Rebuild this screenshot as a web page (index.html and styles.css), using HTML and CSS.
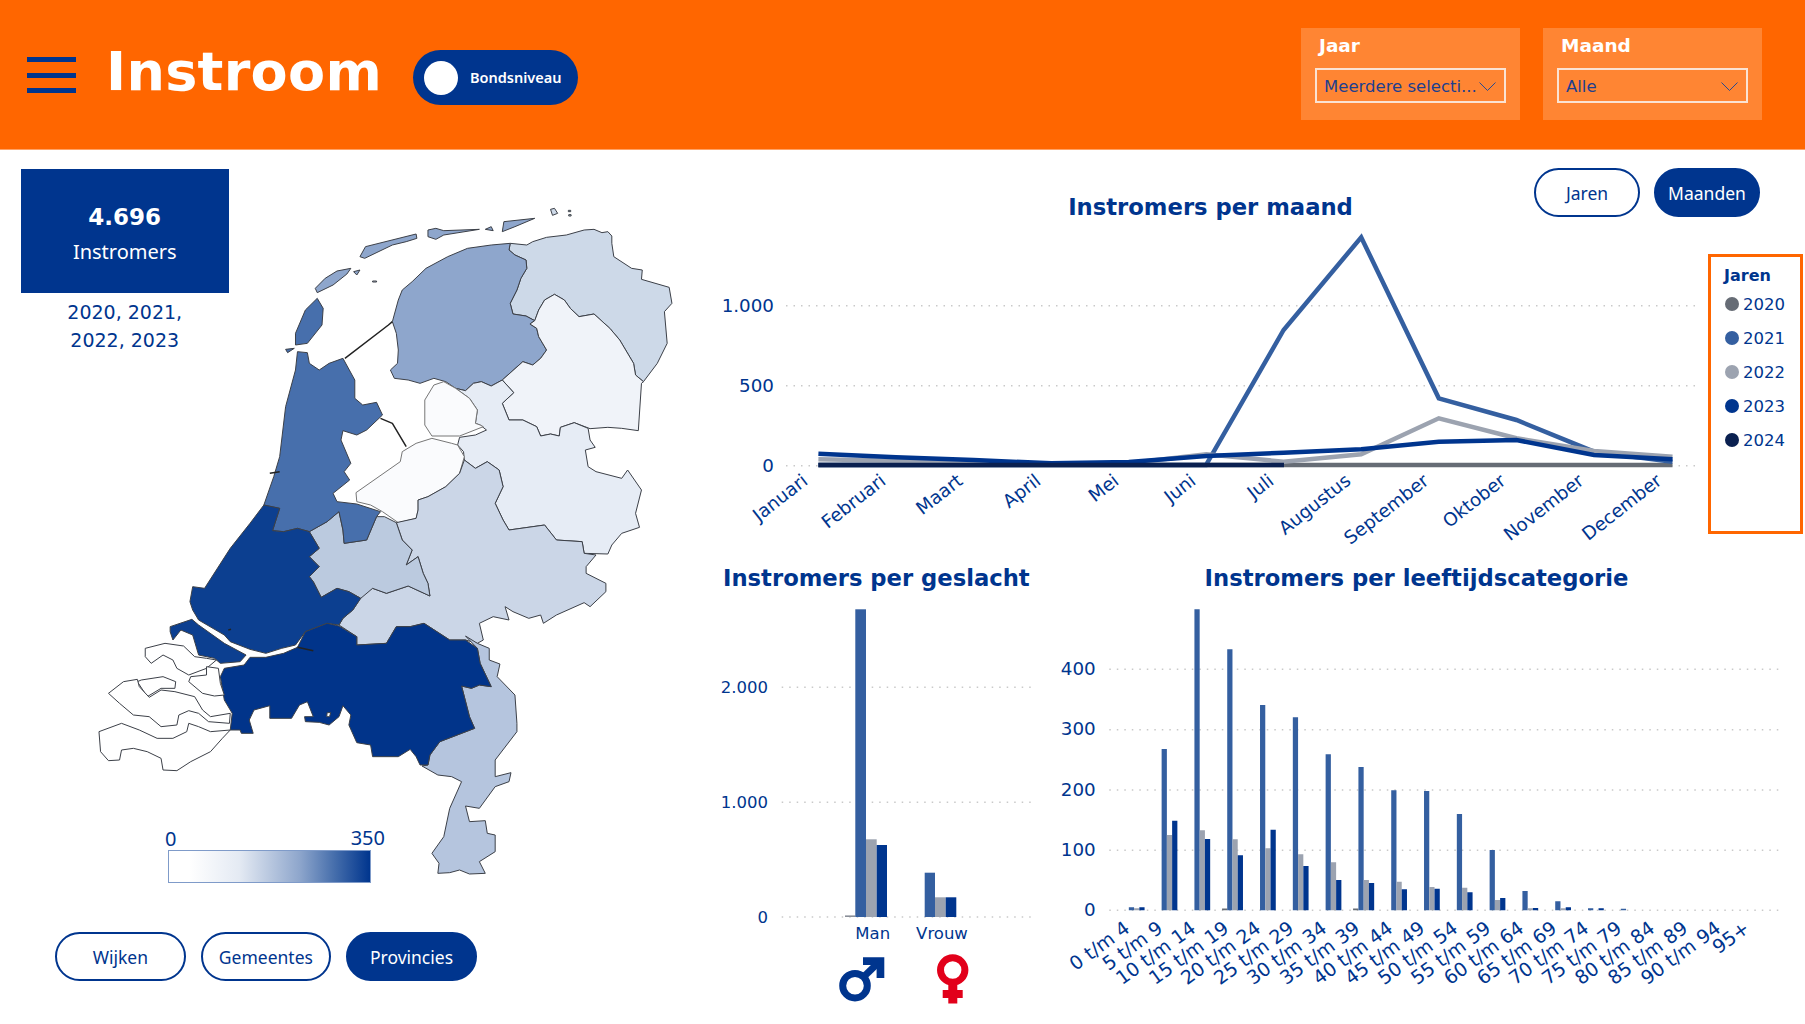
FILE: index.html
```html
<!DOCTYPE html>
<html lang="nl">
<head>
<meta charset="utf-8">
<title>Instroom</title>
<link rel="stylesheet" href="styles.css">
</head>
<body>
<header class="topbar">
  <div class="burger"><span></span><span></span><span></span></div>
  <h1 class="page-title">Instroom</h1>
  <div class="toggle"><span class="knob"></span><span class="toggle-label">Bondsniveau</span></div>
  <div class="filters">
    <div class="filter">
      <div class="filter-label">Jaar</div>
      <div class="select"><span>Meerdere selecti...</span>
        <svg class="chev" viewBox="0 0 17 9"><path d="M.5.5 8.5 8.5 16.5.5"/></svg></div>
    </div>
    <div class="filter">
      <div class="filter-label">Maand</div>
      <div class="select"><span>Alle</span>
        <svg class="chev" viewBox="0 0 17 9"><path d="M.5.5 8.5 8.5 16.5.5"/></svg></div>
    </div>
  </div>
</header>
<main class="dash">
  <section class="left">
    <div class="kpi-col">
      <div class="kpi"><strong>4.696</strong><span>Instromers</span></div>
      <p class="years">2020, 2021, 2022, 2023</p>
    </div>
    <svg class="map" viewBox="0 0 1568 2100" preserveAspectRatio="none">
      <g class="prov">
        <path class="c-gr" d="M1088 130 1130 135 1145 125 1180 112 1230 105 1275 90 1300 88 1320 98 1335 95 1345 108 1345 130 1350 170 1395 205 1422 210 1420 238 1490 262 1497 310 1478 335 1485 430 1460 490 1425 545 1405 525 1400 490 1365 420 1340 385 1300 342 1262 350 1240 325 1225 300 1200 283 1175 300 1160 330 1150 362 1128 348 1095 342 1088 310 1105 270 1115 235 1130 205 1128 180 1100 165 1085 150Z"/>
        <path class="c-fr" d="M1088 130 1085 150 1100 165 1128 180 1130 205 1115 235 1105 270 1088 310 1095 342 1128 348 1150 362 1138 372 1155 385 1160 410 1180 450 1165 475 1145 495 1120 485 1068 540 1040 558 1015 545 995 550 975 572 950 565 925 545 895 535 860 550 830 540 795 535 785 510 803 490 805 450 800 400 790 365 805 300 815 270 840 245 875 205 930 170 980 145 1040 135Z"/>
        <path class="c-dr" d="M1200 283 1225 300 1240 325 1262 350 1300 342 1340 385 1365 420 1400 490 1405 525 1425 545 1420 550 1412 692 1370 685 1335 682 1290 686 1250 668 1215 682 1212 708 1190 702 1165 708 1155 680 1120 660 1085 660 1068 610 1097 578 1068 540 1120 485 1145 495 1165 475 1180 450 1160 410 1155 385 1138 372 1150 362 1160 330 1175 300Z"/>
        <path class="c-ov" d="M950 565 975 572 995 550 1015 545 1040 558 1068 540 1097 578 1068 610 1085 660 1120 660 1155 680 1165 708 1190 702 1212 708 1215 682 1250 668 1285 685 1290 720 1303 742 1278 750 1285 800 1305 815 1370 835 1385 810 1420 870 1405 940 1415 982 1370 1000 1345 1035 1335 1062 1275 1060 1270 1025 1205 1020 1175 975 1085 990 1070 960 1050 910 1070 860 1060 810 1030 785 1000 805 972 780 970 755 955 735 960 712 1000 705 1028 690 1012 675 1000 670 1005 630 985 595Z"/>
        <path class="c-fl thin" d="M920 545 950 565 985 595 1005 630 1000 670 1012 675 1020 680 960 708 890 708 872 675 872 600 895 555Z"/>
        <path class="c-fl thin" d="M890 715 940 730 955 735 972 770 960 820 925 860 880 890 855 900 855 930 850 955 805 968 765 935 735 915 700 905 698 878 810 785 815 755 850 730Z"/>
        <path class="c-ge" d="M972 780 1000 805 1030 785 1060 810 1070 860 1050 910 1070 960 1085 990 1175 975 1205 1020 1270 1025 1275 1060 1305 1065 1280 1100 1280 1120 1330 1150 1330 1175 1290 1220 1275 1208 1205 1245 1172 1270 1165 1245 1135 1255 1095 1235 1075 1220 1085 1260 1045 1250 1010 1270 1020 1320 1005 1330 975 1320 935 1320 870 1270 835 1280 800 1280 775 1330 700 1335 700 1310 655 1275 665 1255 690 1230 720 1175 740 1165 775 1180 830 1158 885 1188 880 1150 868 1120 855 1070 825 1095 840 1050 815 1020 800 968 850 955 855 930 855 900 880 890 925 860 960 820Z"/>
        <path class="c-ut" d="M770 950 800 968 815 1020 840 1050 825 1095 855 1070 868 1120 880 1150 885 1188 830 1158 775 1180 740 1165 710 1195 680 1175 650 1165 610 1192 590 1145 580 1130 605 1100 580 1070 605 1045 580 995 625 965 655 935 665 990 668 1030 725 1020 750 950Z"/>
        <path class="c-nh" d="M550 455 575 458 580 490 605 510 630 490 665 475 695 540 695 595 715 615 750 607 765 645 725 690 700 705 665 692 660 720 685 790 668 815 682 840 640 880 650 905 700 912 760 935 750 950 725 1020 668 1030 665 990 655 935 625 965 580 995 550 985 515 995 487 992 505 925 465 915 490 830 505 770 520 620 545 510Z"/>
        <path class="c-nh" d="M600 295 615 325 612 375 575 430 545 435 545 400 570 330Z"/>
        <path class="c-nh" d="M520 448 542 445 525 458Z"/>
        <path class="c-fr" d="M595 265 620 235 650 213 685 205 675 222 640 255 600 278Z"/>
        <path class="c-fr" d="M692 215 708 210 700 225Z"/>
        <path class="c-fr" d="M722 140 850 102 852 115 825 125 790 135 720 175 708 170Z"/>
        <path class="c-fr" d="M880 90 900 85 920 92 1010 88 920 105 900 118 880 110Z"/>
        <path class="c-fr" d="M1025 88 1040 80 1045 92Z"/>
        <path class="c-fr" d="M1072 65 1150 55 1100 80 1068 95Z"/>
        <path class="c-gr" d="M1190 28 1200 25 1208 40 1195 46Z"/>
        <path class="c-gr" d="M1235 31h6v4h-6ZM1236 44h6v4h-6ZM740 243h10v3h-10Z"/>
        <path class="line" d="M670 475 780 375 790 365M760 655 790 670 825 740M480 820 505 815"/>
        <path class="c-zh" d="M465 915 505 925 487 992 515 995 550 985 580 995 605 1045 580 1070 605 1100 580 1130 590 1145 610 1192 650 1165 680 1175 710 1195 690 1230 665 1255 655 1275 625 1270 570 1295 545 1335 510 1345 470 1360 430 1348 380 1325 365 1305 300 1260 285 1230 278 1205 285 1160 315 1165 380 1045 430 970Z"/>
        <path class="c-zh" d="M228 1280 283 1258 300 1275 365 1330 420 1365 405 1385 355 1390 340 1375 300 1365 285 1305 255 1290 235 1320 228 1295Z"/>
        <g transform="translate(0 1080)">
          <path class="c-li" d="M975 228 1005 250 1035 265 1035 300 1062 312 1055 350 1100 405 1105 490 1105 515 1050 600 1050 650 1090 638 1085 665 1050 680 1010 745 975 738 985 785 1025 782 1030 820 1050 825 1050 875 1010 905 1025 940 985 942 960 930 935 938 905 940 908 910 890 880 920 830 935 745 965 665 940 650 905 645 865 618 880 615 885 585 910 545 998 505 985 470 965 378 990 385 1010 375 1040 380 1012 310 1005 265Z"/>
          <path class="c-nb" d="M365 325 415 315 430 292 470 292 515 280 550 262 570 215 625 190 655 198 700 230 700 255 775 250 800 200 835 200 870 190 935 240 975 240 1005 265 1012 310 1040 380 1010 375 990 385 965 378 985 470 998 505 910 545 885 585 880 615 860 615 850 590 835 568 805 590 740 590 735 555 700 548 680 495 685 465 665 437 655 470 630 495 605 487 570 485 568 470 590 470 575 425 555 435 535 475 480 475 480 437 440 450 428 480 438 520 408 520 405 510 380 510 385 460 365 420 355 350Z"/>
          <path class="c-ze" d="M625 458h9l-3 12h-7Z"/>
          <path class="line" d="M550 262 590 272M375 210 382 208"/>
          <path class="c-ze" d="M165 265 215 250 262 258 290 290 320 295 345 300 320 325 275 345 245 325 235 300 210 285 180 310 165 290Z"/>
          <path class="c-ze" d="M155 360 210 350 242 365 240 385 205 385 170 410 145 365Z"/>
          <path class="c-ze" d="M320 320 350 325 355 370 365 405 340 408 310 400 275 365 280 350 320 345Z"/>
          <path class="c-ze" d="M72 400 110 365 145 358 150 380 175 412 205 390 240 395 290 410 310 450 330 470 380 460 378 490 325 485 300 460 275 452 250 465 245 495 205 500 175 470 135 465 100 430Z"/>
          <path class="c-ze" d="M48 515 105 490 150 510 195 535 235 535 270 515 275 490 300 500 330 515 380 510 360 535 330 575 280 605 245 632 210 630 205 595 170 575 135 565 105 570 100 600 72 602 52 575Z"/>
        </g>
      </g>
    </svg>
    <div class="scale">
      <div class="scale-labels"><span>0</span><span>350</span></div>
      <div class="scale-bar"></div>
    </div>
    <div class="levels">
      <button class="pill">Wijken</button>
      <button class="pill">Gemeentes</button>
      <button class="pill on">Provincies</button>
    </div>
  </section>

  <section class="right">
    <div class="top-row">
      <svg class="chart line-chart" viewBox="700 150 1008 410">
        <text class="title" x="1210.5" y="215" text-anchor="middle">Instromers per maand</text>
        <path class="grid" d="M786 305.7H1700M786 385.7H1700M786 465.7H1700"/>
        <g class="tick" text-anchor="end">
          <text x="774" y="311.5">1.000</text>
          <text x="774" y="391.5">500</text>
          <text x="774" y="471.5">0</text>
        </g>
        <path class="ln s20" d="M818.4 465H1672.5"/>
        <path class="ln s21" d="M818.4 465H1206L1283.6 330 1361.2 237.3 1438.8 398.3 1516.4 420 1594 451.7 1672.5 461.7"/>
        <path class="ln s22" d="M818.4 459.3 896 460.7 973.6 462.7 1051.2 464 1128.8 463.3 1206.4 454.3 1283.6 461.7 1361.2 454.3 1438.8 418.3 1516.4 438.3 1594 451 1672.5 456.7"/>
        <path class="ln s23" d="M818.4 453.7 896 457.3 973.6 460 1051.2 463.3 1128.8 462 1206.4 456 1283.6 452.7 1361.2 449.3 1438.8 441.7 1516.4 440 1594 455 1672.5 459.3"/>
        <path class="ln s24" d="M818.4 465H1284"/>
        <g class="tick months">
          <text transform="translate(809 483) rotate(-38)" text-anchor="end">Januari</text>
          <text transform="translate(887 483) rotate(-38)" text-anchor="end">Februari</text>
          <text transform="translate(964 483) rotate(-38)" text-anchor="end">Maart</text>
          <text transform="translate(1042 483) rotate(-38)" text-anchor="end">April</text>
          <text transform="translate(1120 483) rotate(-38)" text-anchor="end">Mei</text>
          <text transform="translate(1197 483) rotate(-38)" text-anchor="end">Juni</text>
          <text transform="translate(1275 483) rotate(-38)" text-anchor="end">Juli</text>
          <text transform="translate(1352 483) rotate(-38)" text-anchor="end">Augustus</text>
          <text transform="translate(1430 483) rotate(-38)" text-anchor="end">September</text>
          <text transform="translate(1507 483) rotate(-38)" text-anchor="end">Oktober</text>
          <text transform="translate(1585 483) rotate(-38)" text-anchor="end">November</text>
          <text transform="translate(1663 483) rotate(-38)" text-anchor="end">December</text>
        </g>
      </svg>
      <div class="period">
        <button class="pill">Jaren</button>
        <button class="pill on">Maanden</button>
      </div>
      <aside class="legend">
        <div class="legend-title">Jaren</div>
        <div class="legend-item"><i class="dot d20"></i>2020</div>
        <div class="legend-item"><i class="dot d21"></i>2021</div>
        <div class="legend-item"><i class="dot d22"></i>2022</div>
        <div class="legend-item"><i class="dot d23"></i>2023</div>
        <div class="legend-item"><i class="dot d24"></i>2024</div>
      </aside>
    </div>
    <div class="bottom-row">
      <svg class="chart gender-chart" viewBox="700 560 340 464">
        <text class="title" x="723" y="586">Instromers per geslacht</text>
        <path class="grid" d="M781.7 687.3H1031.7M781.7 802.3H1031.7M781.7 917H1031.7"/>
        <g class="tick small" text-anchor="end">
          <text x="768" y="693">2.000</text>
          <text x="768" y="808">1.000</text>
          <text x="768" y="923">0</text>
        </g>
        <rect class="f20" x="845" y="915.4" width="10.3" height="1.6"/>
        <rect class="f21" x="855.3" y="609.3" width="10.7" height="307.7"/>
        <rect class="f22" x="866" y="839.3" width="10.7" height="77.7"/>
        <rect class="f23" x="876.7" y="845" width="10.3" height="72"/>
        <rect class="f21" x="924.7" y="872.7" width="10.3" height="44.3"/>
        <rect class="f22" x="935" y="897.3" width="10.7" height="19.7"/>
        <rect class="f23" x="945.7" y="897.3" width="10.6" height="19.7"/>
        <g class="tick small" text-anchor="middle">
          <text x="872.7" y="939">Man</text>
          <text x="942" y="939">Vrouw</text>
        </g>
        <g class="male">
          <circle cx="855" cy="985.7" r="12.3"/>
          <path d="M864 976.5 880 961"/>
          <path class="head" d="M863 957.3H884.3V978H876.6V965H863Z"/>
        </g>
        <g class="female">
          <circle cx="952.7" cy="970" r="12.2"/>
          <path class="head" d="M948.3 984H957.3V990H962.7V998H957.3V1003.5H948.3V998H942.7V990H948.3Z"/>
        </g>
      </svg>
      <svg class="chart age-chart" viewBox="1040 560 765 464">
        <text class="title" x="1416.5" y="586" text-anchor="middle">Instromers per leeftijdscategorie</text>
        <path class="grid" d="M1109.3 669.3H1782.7M1109.3 729.7H1782.7M1109.3 790H1782.7M1109.3 850.3H1782.7M1109.3 910.3H1782.7"/>
        <g class="tick" text-anchor="end">
          <text x="1095.7" y="675">400</text>
          <text x="1095.7" y="735">300</text>
          <text x="1095.7" y="795.5">200</text>
          <text x="1095.7" y="856">100</text>
          <text x="1095.7" y="916">0</text>
        </g>
        <path class="bar b20" d="M1224.7 908.6V910.3M1355.7 908.6V910.3"/>
        <path class="bar b21" d="M1131.45 907.3V910.3M1164.25 749V910.3M1197.05 609.3V910.3M1229.85 649.3V910.3M1262.65 705V910.3M1295.45 717.3V910.3M1328.25 754.3V910.3M1361.05 767V910.3M1393.85 790.3V910.3M1426.65 791V910.3M1459.45 814V910.3M1492.25 850V910.3M1525.05 891V910.3M1557.85 901.3V910.3M1590.65 908.3V910.3M1623.45 908.7V910.3"/>
        <path class="bar b22" d="M1136.7 908.3V910.3M1169.5 835V910.3M1202.3 830.3V910.3M1235.1 839.3V910.3M1267.9 848.3V910.3M1300.7 854.3V910.3M1333.5 862.3V910.3M1366.3 880V910.3M1399.1 881.7V910.3M1431.9 887V910.3M1464.7 887.7V910.3M1497.5 900V910.3M1530.3 908.3V910.3M1563.1 908.3V910.3"/>
        <path class="bar b23" d="M1141.95 907.3V910.3M1174.75 820.7V910.3M1207.55 839V910.3M1240.35 855.3V910.3M1273.15 829.7V910.3M1305.95 866V910.3M1338.75 880V910.3M1371.55 883V910.3M1404.35 889.3V910.3M1437.15 888.7V910.3M1469.95 892.3V910.3M1502.75 898V910.3M1535.55 908V910.3M1568.35 907.3V910.3M1601.15 908.3V910.3"/>
        <g class="tick age" text-anchor="end">
          <text transform="translate(1131 931) rotate(-36)">0 t/m 4</text>
          <text transform="translate(1164 931) rotate(-36)">5 t/m 9</text>
          <text transform="translate(1197 931) rotate(-36)">10 t/m 14</text>
          <text transform="translate(1230 931) rotate(-36)">15 t/m 19</text>
          <text transform="translate(1262 931) rotate(-36)">20 t/m 24</text>
          <text transform="translate(1295 931) rotate(-36)">25 t/m 29</text>
          <text transform="translate(1328 931) rotate(-36)">30 t/m 34</text>
          <text transform="translate(1361 931) rotate(-36)">35 t/m 39</text>
          <text transform="translate(1394 931) rotate(-36)">40 t/m 44</text>
          <text transform="translate(1426 931) rotate(-36)">45 t/m 49</text>
          <text transform="translate(1459 931) rotate(-36)">50 t/m 54</text>
          <text transform="translate(1492 931) rotate(-36)">55 t/m 59</text>
          <text transform="translate(1525 931) rotate(-36)">60 t/m 64</text>
          <text transform="translate(1558 931) rotate(-36)">65 t/m 69</text>
          <text transform="translate(1590 931) rotate(-36)">70 t/m 74</text>
          <text transform="translate(1623 931) rotate(-36)">75 t/m 79</text>
          <text transform="translate(1656 931) rotate(-36)">80 t/m 84</text>
          <text transform="translate(1689 931) rotate(-36)">85 t/m 89</text>
          <text transform="translate(1722 931) rotate(-36)">90 t/m 94</text>
          <text transform="translate(1751 931) rotate(-36)">95+</text>
        </g>
      </svg>
    </div>
  </section>
</main>
</body>
</html>
```
FILE: styles.css
```css
* { box-sizing: border-box; }
html, body { margin: 0; padding: 0; }
body {
  width: 1805px;
  height: 1024px;
  overflow: hidden;
  background: #fff;
  color: #00358e;
  font-family: "DejaVu Sans", sans-serif;
}

/* top bar */
.topbar {
  height: 150px;
  background: #ff6600;
  border-bottom: 1px solid #ffa266;
  display: flex;
  align-items: flex-start;
  padding-left: 27px;
}
.burger {
  width: 49px;
  margin-top: 57px;
  display: flex;
  flex-direction: column;
  gap: 10.5px;
}
.burger span { height: 5px; background: #00358e; }
.page-title {
  margin: 39px 0 0 30px;
  color: #fff;
  font-size: 54px;
  line-height: 66px;
  font-weight: 700;
  letter-spacing: .3px;
}
.toggle {
  margin: 50px 0 0 31px;
  width: 165px;
  height: 55px;
  border-radius: 28px;
  background: #00358e;
  display: flex;
  align-items: center;
  padding-left: 11px;
}
.knob { width: 34px; height: 34px; border-radius: 50%; background: #fff; }
.toggle-label {
  margin: -2px 0 0 12px;
  color: #fff;
  font-family: "Noto Sans", sans-serif;
  font-size: 14.5px;
  font-weight: 600;
}
.filters {
  margin: 28px 43px 0 auto;
  display: flex;
  gap: 23px;
}
.filter {
  width: 219px;
  height: 92px;
  background: #ff8533;
  padding: 6px 14px 0;
}
.filter-label {
  color: #fff;
  font-weight: 700;
  font-size: 18.5px;
  line-height: 24px;
  padding-left: 4px;
}
.select {
  margin-top: 10px;
  height: 35px;
  border: 2px solid #fbe3d3;
  color: #1d3f8f;
  font-size: 16.5px;
  padding: 2px 8px 0 7px;
  display: flex;
  align-items: center;
  justify-content: space-between;
  white-space: nowrap;
}
.chev { width: 17px; height: 9px; flex: none; }
.chev path { fill: none; stroke: #2a4a8f; stroke-width: 1; }

/* layout */
.dash {
  height: 874px;
  display: grid;
  grid-template-columns: 700px 1105px;
}
.left { display: grid; height: 874px; }
.left > * { grid-area: 1 / 1; }

.kpi-col {
  margin: 19px 0 0 21px;
  width: 207.5px;
  align-self: start;
  justify-self: start;
}
.kpi {
  height: 124px;
  background: #00358e;
  color: #fff;
  display: flex;
  flex-direction: column;
  align-items: center;
  padding-top: 32px;
}
.kpi strong { font-size: 23px; line-height: 33px; }
.kpi span {
  font-family: "Noto Sans", sans-serif;
  font-size: 20px;
  line-height: 36px;
}
.years {
  margin: 6px auto 0;
  width: 135px;
  text-align: center;
  font-size: 19px;
  line-height: 27.5px;
}

.map {
  width: 620px;
  height: 700px;
  margin: 50px 0 0 80px;
  align-self: start;
  justify-self: start;
}
.prov path { stroke: #3c4048; stroke-width: 1; vector-effect: non-scaling-stroke; stroke-linejoin: round; }
.prov .thin { stroke: #777; }
.prov .line { fill: none; stroke: #222; stroke-width: 1.5; }
.c-gr { fill: #cdd9e8; }
.c-fr { fill: #8ea6cc; }
.c-dr { fill: #f0f3f9; }
.c-ov { fill: #e6ecf5; }
.c-fl { fill: #fafbfd; }
.c-ge { fill: #cbd6e7; }
.c-ut { fill: #bbcadf; }
.c-nh { fill: #476fac; }
.c-zh { fill: #0c3f90; }
.c-nb { fill: #01348a; }
.c-li { fill: #b5c5de; }
.c-ze { fill: #fff; }

.scale {
  width: 220px;
  margin: 675px 0 0 165px;
  align-self: start;
  justify-self: start;
}
.scale-labels {
  display: flex;
  justify-content: space-between;
  align-items: flex-end;
  font-family: "Noto Sans", sans-serif;
  font-size: 20px;
  line-height: 25px;
}
.scale-labels span:first-child { margin-bottom: -1px; }
.scale-bar {
  width: 203px;
  height: 33px;
  margin-left: 3px;
  border: 1px solid #7f9bc9;
  background: linear-gradient(90deg, #fff 0%, #fff 10%, #e4eaf3 35%, #8ea6cc 65%, #476fac 82%, #00358e 100%);
}

.pill {
  height: 49px;
  width: 130.6px;
  border-radius: 25px;
  border: 2px solid #00358e;
  background: #fff;
  color: #00358e;
  font-family: "Noto Sans", sans-serif;
  font-size: 17.5px;
  padding: 0;
}
.pill.on { background: #00358e; color: #fff; }
.levels {
  align-self: end;
  justify-self: start;
  display: flex;
  gap: 15px;
  margin: 0 0 43px 55px;
}

/* charts */
.right { display: flex; flex-direction: column; }
.top-row {
  height: 410px;
  display: grid;
  grid-template-columns: 1008px 97px;
  grid-template-rows: 104px 280px 26px;
}
.line-chart { grid-column: 1; grid-row: 1 / 4; }
.period {
  grid-column: 1 / 3;
  grid-row: 1;
  justify-self: end;
  align-self: start;
  margin: 18px 45px 0 0;
  display: flex;
  gap: 14px;
}
.period .pill { width: 106px; }
.legend {
  grid-column: 2;
  grid-row: 2;
  border: 3px solid #ff6600;
  margin-right: 2px;
  padding: 9px 0 0 13px;
  font-size: 16.5px;
}
.legend-title { font-weight: 700; font-size: 16px; line-height: 20px; margin-bottom: 1px; }
.legend-item {
  height: 34px;
  display: flex;
  align-items: center;
  gap: 4px;
  margin-left: 1px;
}
.dot { width: 14px; height: 14px; border-radius: 50%; display: block; }
.d20 { background: #666c75; }
.d21 { background: #345fa0; }
.d22 { background: #9ca3b0; }
.d23 { background: #00358e; }
.d24 { background: #0a2050; }

.bottom-row { height: 464px; display: flex; }
.chart { display: block; }
.line-chart { width: 1008px; height: 410px; }
.gender-chart { width: 340px; height: 464px; flex: none; }
.age-chart { width: 765px; height: 464px; flex: none; }

.title { font-size: 22.7px; font-weight: 700; fill: #00358e; }
.tick { font-size: 18.3px; fill: #00358e; }
.tick.small { font-size: 16.5px; }
.tick.age { font-size: 19px; }
.grid { stroke: #c9c9c9; stroke-width: 1.5; stroke-dasharray: 1.5 6; fill: none; }
.ln { fill: none; stroke-width: 4.5; stroke-linejoin: miter; }
.s20 { stroke: #666c75; }
.s21 { stroke: #345fa0; }
.s22 { stroke: #9ca3b0; }
.s23 { stroke: #00358e; }
.s24 { stroke: #0a2050; }
.f20 { fill: #8a8f98; }
.f21 { fill: #345fa0; }
.f22 { fill: #9ca3b0; }
.f23 { fill: #00358e; }
.bar { fill: none; stroke-width: 5.25; }
.b20 { stroke: #666c75; }
.b21 { stroke: #345fa0; }
.b22 { stroke: #9ca3b0; }
.b23 { stroke: #00358e; }
.male circle, .male path { fill: none; stroke: #00358e; stroke-width: 7; }
.male .head { fill: #00358e; stroke: none; }
.female circle { fill: none; stroke: #e2001a; stroke-width: 7; }
.female .head { fill: #e2001a; }
```
